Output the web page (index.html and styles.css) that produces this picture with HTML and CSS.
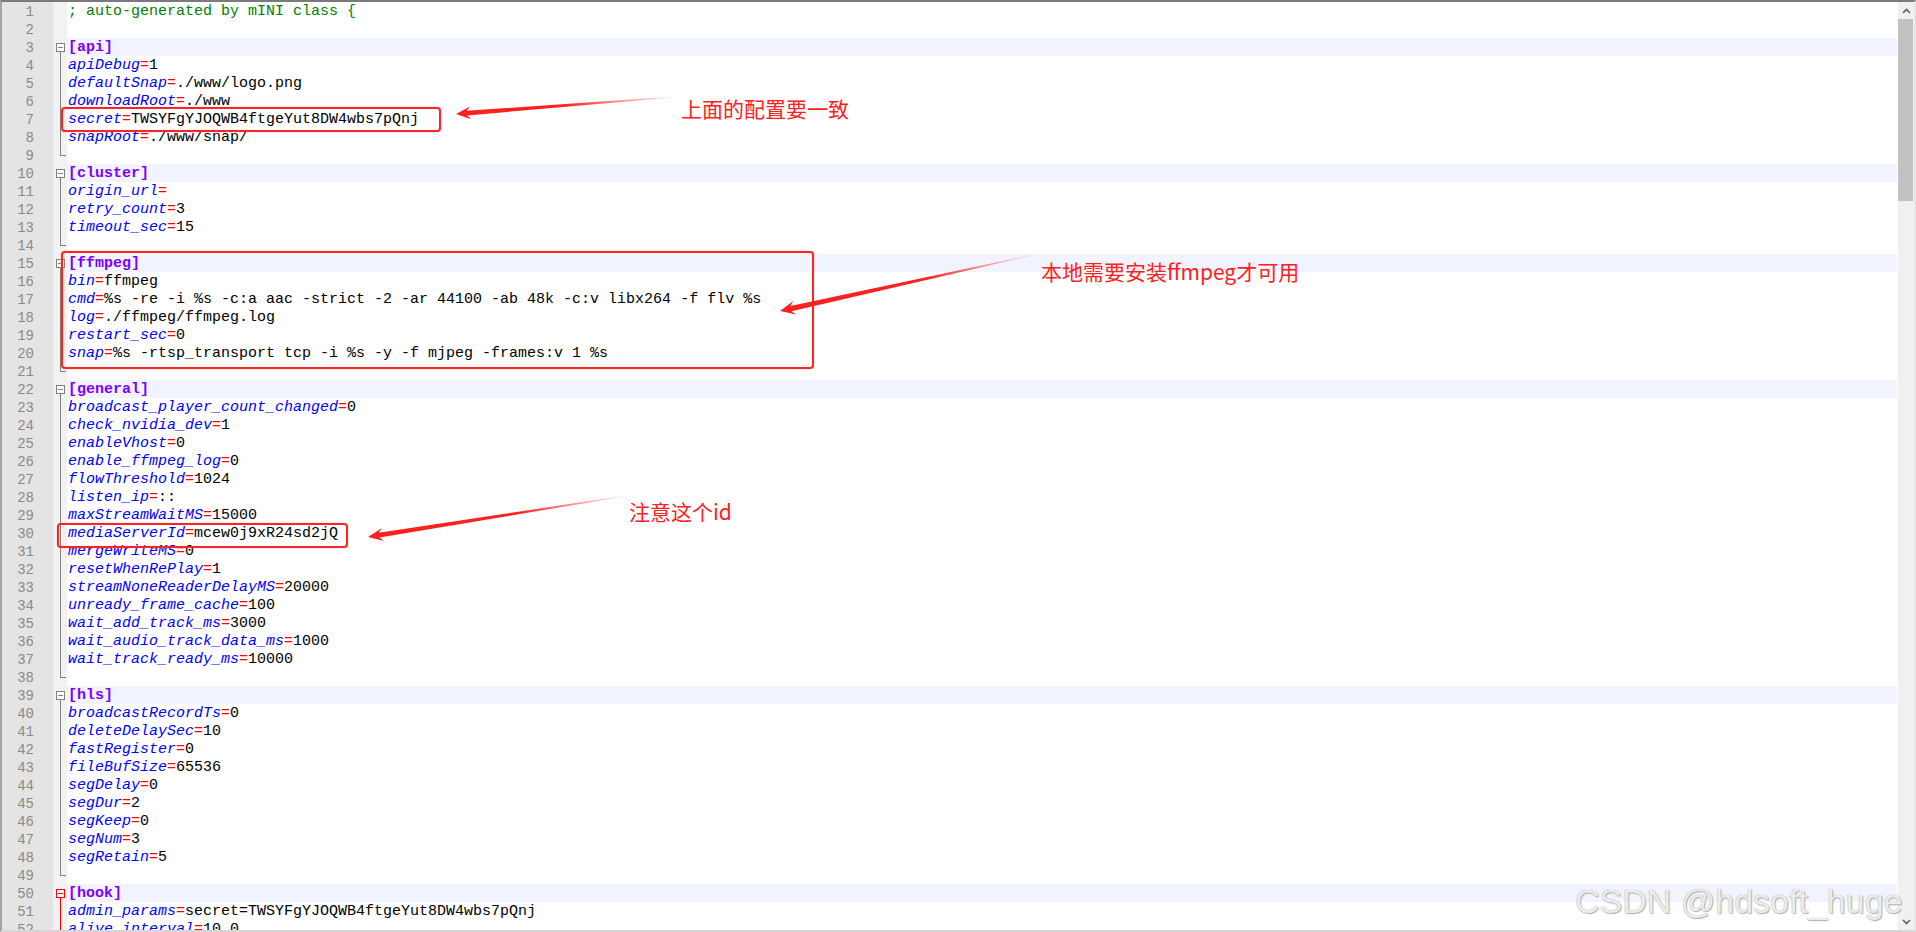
FILE: index.html
```html
<!DOCTYPE html>
<html lang="zh-CN">
<head>
<meta charset="utf-8">
<title>config.ini</title>
<link rel="stylesheet" href="styles.css">
</head>
<body>
<div class="screen">
  <div class="editor">
    <div class="lines">
      <div class="ln"><span class="no">1</span><span class="fm"></span><span class="code"><span class="c">; auto-generated by mINI class {</span></span></div>
      <div class="ln"><span class="no">2</span><span class="fm"></span><span class="code"></span></div>
      <div class="ln sec"><span class="no">3</span><span class="fm head"></span><span class="code"><span class="s">[api]</span></span></div>
      <div class="ln"><span class="no">4</span><span class="fm mid"></span><span class="code"><span class="k">apiDebug</span><span class="q">=</span>1</span></div>
      <div class="ln"><span class="no">5</span><span class="fm mid"></span><span class="code"><span class="k">defaultSnap</span><span class="q">=</span>./www/logo.png</span></div>
      <div class="ln"><span class="no">6</span><span class="fm mid"></span><span class="code"><span class="k">downloadRoot</span><span class="q">=</span>./www</span></div>
      <div class="ln"><span class="no">7</span><span class="fm mid"></span><span class="code"><span class="k">secret</span><span class="q">=</span>TWSYFgYJOQWB4ftgeYut8DW4wbs7pQnj</span></div>
      <div class="ln"><span class="no">8</span><span class="fm mid"></span><span class="code"><span class="k">snapRoot</span><span class="q">=</span>./www/snap/</span></div>
      <div class="ln"><span class="no">9</span><span class="fm end"></span><span class="code"></span></div>
      <div class="ln sec"><span class="no">10</span><span class="fm head"></span><span class="code"><span class="s">[cluster]</span></span></div>
      <div class="ln"><span class="no">11</span><span class="fm mid"></span><span class="code"><span class="k">origin_url</span><span class="q">=</span></span></div>
      <div class="ln"><span class="no">12</span><span class="fm mid"></span><span class="code"><span class="k">retry_count</span><span class="q">=</span>3</span></div>
      <div class="ln"><span class="no">13</span><span class="fm mid"></span><span class="code"><span class="k">timeout_sec</span><span class="q">=</span>15</span></div>
      <div class="ln"><span class="no">14</span><span class="fm end"></span><span class="code"></span></div>
      <div class="ln sec"><span class="no">15</span><span class="fm head"></span><span class="code"><span class="s">[ffmpeg]</span></span></div>
      <div class="ln"><span class="no">16</span><span class="fm mid"></span><span class="code"><span class="k">bin</span><span class="q">=</span>ffmpeg</span></div>
      <div class="ln"><span class="no">17</span><span class="fm mid"></span><span class="code"><span class="k">cmd</span><span class="q">=</span>%s -re -i %s -c:a aac -strict -2 -ar 44100 -ab 48k -c:v libx264 -f flv %s</span></div>
      <div class="ln"><span class="no">18</span><span class="fm mid"></span><span class="code"><span class="k">log</span><span class="q">=</span>./ffmpeg/ffmpeg.log</span></div>
      <div class="ln"><span class="no">19</span><span class="fm mid"></span><span class="code"><span class="k">restart_sec</span><span class="q">=</span>0</span></div>
      <div class="ln"><span class="no">20</span><span class="fm mid"></span><span class="code"><span class="k">snap</span><span class="q">=</span>%s -rtsp_transport tcp -i %s -y -f mjpeg -frames:v 1 %s</span></div>
      <div class="ln"><span class="no">21</span><span class="fm end"></span><span class="code"></span></div>
      <div class="ln sec"><span class="no">22</span><span class="fm head"></span><span class="code"><span class="s">[general]</span></span></div>
      <div class="ln"><span class="no">23</span><span class="fm mid"></span><span class="code"><span class="k">broadcast_player_count_changed</span><span class="q">=</span>0</span></div>
      <div class="ln"><span class="no">24</span><span class="fm mid"></span><span class="code"><span class="k">check_nvidia_dev</span><span class="q">=</span>1</span></div>
      <div class="ln"><span class="no">25</span><span class="fm mid"></span><span class="code"><span class="k">enableVhost</span><span class="q">=</span>0</span></div>
      <div class="ln"><span class="no">26</span><span class="fm mid"></span><span class="code"><span class="k">enable_ffmpeg_log</span><span class="q">=</span>0</span></div>
      <div class="ln"><span class="no">27</span><span class="fm mid"></span><span class="code"><span class="k">flowThreshold</span><span class="q">=</span>1024</span></div>
      <div class="ln"><span class="no">28</span><span class="fm mid"></span><span class="code"><span class="k">listen_ip</span><span class="q">=</span>::</span></div>
      <div class="ln"><span class="no">29</span><span class="fm mid"></span><span class="code"><span class="k">maxStreamWaitMS</span><span class="q">=</span>15000</span></div>
      <div class="ln"><span class="no">30</span><span class="fm mid"></span><span class="code"><span class="k">mediaServerId</span><span class="q">=</span>mcew0j9xR24sd2jQ</span></div>
      <div class="ln"><span class="no">31</span><span class="fm mid"></span><span class="code"><span class="k">mergeWriteMS</span><span class="q">=</span>0</span></div>
      <div class="ln"><span class="no">32</span><span class="fm mid"></span><span class="code"><span class="k">resetWhenRePlay</span><span class="q">=</span>1</span></div>
      <div class="ln"><span class="no">33</span><span class="fm mid"></span><span class="code"><span class="k">streamNoneReaderDelayMS</span><span class="q">=</span>20000</span></div>
      <div class="ln"><span class="no">34</span><span class="fm mid"></span><span class="code"><span class="k">unready_frame_cache</span><span class="q">=</span>100</span></div>
      <div class="ln"><span class="no">35</span><span class="fm mid"></span><span class="code"><span class="k">wait_add_track_ms</span><span class="q">=</span>3000</span></div>
      <div class="ln"><span class="no">36</span><span class="fm mid"></span><span class="code"><span class="k">wait_audio_track_data_ms</span><span class="q">=</span>1000</span></div>
      <div class="ln"><span class="no">37</span><span class="fm mid"></span><span class="code"><span class="k">wait_track_ready_ms</span><span class="q">=</span>10000</span></div>
      <div class="ln"><span class="no">38</span><span class="fm end"></span><span class="code"></span></div>
      <div class="ln sec"><span class="no">39</span><span class="fm head"></span><span class="code"><span class="s">[hls]</span></span></div>
      <div class="ln"><span class="no">40</span><span class="fm mid"></span><span class="code"><span class="k">broadcastRecordTs</span><span class="q">=</span>0</span></div>
      <div class="ln"><span class="no">41</span><span class="fm mid"></span><span class="code"><span class="k">deleteDelaySec</span><span class="q">=</span>10</span></div>
      <div class="ln"><span class="no">42</span><span class="fm mid"></span><span class="code"><span class="k">fastRegister</span><span class="q">=</span>0</span></div>
      <div class="ln"><span class="no">43</span><span class="fm mid"></span><span class="code"><span class="k">fileBufSize</span><span class="q">=</span>65536</span></div>
      <div class="ln"><span class="no">44</span><span class="fm mid"></span><span class="code"><span class="k">segDelay</span><span class="q">=</span>0</span></div>
      <div class="ln"><span class="no">45</span><span class="fm mid"></span><span class="code"><span class="k">segDur</span><span class="q">=</span>2</span></div>
      <div class="ln"><span class="no">46</span><span class="fm mid"></span><span class="code"><span class="k">segKeep</span><span class="q">=</span>0</span></div>
      <div class="ln"><span class="no">47</span><span class="fm mid"></span><span class="code"><span class="k">segNum</span><span class="q">=</span>3</span></div>
      <div class="ln"><span class="no">48</span><span class="fm mid"></span><span class="code"><span class="k">segRetain</span><span class="q">=</span>5</span></div>
      <div class="ln"><span class="no">49</span><span class="fm end"></span><span class="code"></span></div>
      <div class="ln sec"><span class="no">50</span><span class="fm head red"></span><span class="code"><span class="s">[hook]</span></span></div>
      <div class="ln"><span class="no">51</span><span class="fm mid red"></span><span class="code"><span class="k">admin_params</span><span class="q">=</span>secret=TWSYFgYJOQWB4ftgeYut8DW4wbs7pQnj</span></div>
      <div class="ln"><span class="no">52</span><span class="fm mid red"></span><span class="code"><span class="k">alive_interval</span><span class="q">=</span>10.0</span></div>
    </div>
    <div class="sb">
      <div class="sb-btn"><svg width="9" height="6" viewBox="0 0 9 6"><polyline points="1,5 4.5,1.5 8,5" fill="none" stroke="#606060" stroke-width="1.6"/></svg></div>
      <div class="sb-thumb"></div>
      <div class="sb-track"></div>
      <div class="sb-btn"><svg width="9" height="6" viewBox="0 0 9 6"><polyline points="1,1 4.5,4.5 8,1" fill="none" stroke="#606060" stroke-width="1.6"/></svg></div>
    </div>
  </div>

  <div class="box box1"></div>
  <div class="box box2"></div>
  <div class="box box3"></div>

  <svg class="arrows" width="1916" height="932" viewBox="0 0 1916 932">
    <defs>
      <linearGradient id="fade" gradientUnits="userSpaceOnUse" x1="0" y1="0" x2="110" y2="0">
        <stop offset="0" stop-color="#ff2020" stop-opacity="0.05"/>
        <stop offset="1" stop-color="#ff2020" stop-opacity="1"/>
      </linearGradient>
    </defs>
    <g transform="translate(673 97) rotate(175.52)">
      <polygon fill="url(#fade)" points="0,-0.4 206.7,-2.3 203,-6.5 217.7,0 203,6.5 206.7,2.3 0,0.4"/>
    </g>
    <g transform="translate(1033 255) rotate(167.52)">
      <polygon fill="url(#fade)" points="0,-0.4 248,-2.6 244,-7 259.1,0 244,7 248,2.6 0,0.4"/>
    </g>
    <g transform="translate(625 496) rotate(170.94)">
      <polygon fill="url(#fade)" points="0,-0.4 249,-2.4 245,-6.6 260.2,0 245,6.6 249,2.4 0,0.4"/>
    </g>
  </svg>

  <div class="note note1">上面的配置要一致</div>
  <div class="note note2">本地需要安装ffmpeg才可用</div>
  <div class="note note3">注意这个id</div>

  <div class="watermark">CSDN @hdsoft_huge</div>
</div>
</body>
</html>
```

FILE: styles.css
```css
html, body {
  margin: 0;
  padding: 0;
  background: #ffffff;
}

.screen {
  position: relative;
  width: 1916px;
  height: 932px;
  overflow: hidden;
  background: #ffffff;
}

.editor {
  display: flex;
  height: 928px;
  border-top: 2px solid #7a7a7a;
  border-bottom: 2px solid #d6d6d6;
  border-left: 2px solid #a4a4a4;
  border-right: 2px solid #e6e6e6;
  box-sizing: content-box;
  width: 1912px;
}

.lines {
  flex: 1;
  min-width: 0;
  overflow: hidden;
  font-family: "Liberation Mono", "Courier New", monospace;
  font-size: 15px;
  color: #000000;
}

.ln {
  display: flex;
  height: 18px;
  line-height: 20px;
}

.no {
  width: 51px;
  flex: none;
  box-sizing: border-box;
  padding-right: 19px;
  text-align: right;
  background: #e4e4e4;
  color: #8a8a8a;
  font-size: 14px;
}

.fm {
  width: 14px;
  flex: none;
  position: relative;
  background: repeating-conic-gradient(#ebebeb 0 25%, #f9f9f9 0 50%) 0 0 / 2px 2px;
}

.code {
  flex: 1;
  min-width: 0;
  padding-left: 1px;
  white-space: pre;
}

.sec .code {
  background: #f1f3fe;
}

.c { color: #008000; }
.s { color: #8000ff; font-weight: bold; }
.k { color: #0000ff; font-style: italic; }
.q { color: #ff0000; }

/* fold markers */
.fm.head::before {
  content: "";
  position: absolute;
  left: 3px;
  top: 5px;
  width: 9px;
  height: 9px;
  box-sizing: border-box;
  border: 1px solid #808080;
  background: linear-gradient(#808080, #808080) center / 5px 1px no-repeat, #ffffff;
}
.fm.head::after {
  content: "";
  position: absolute;
  left: 7px;
  top: 14px;
  bottom: 0;
  width: 1px;
  background: #808080;
}
.fm.mid::after {
  content: "";
  position: absolute;
  left: 7px;
  top: 0;
  bottom: 0;
  width: 1px;
  background: #808080;
}
.fm.end::after {
  content: "";
  position: absolute;
  left: 7px;
  top: 0;
  height: 10px;
  width: 1px;
  background: #808080;
}
.fm.end::before {
  content: "";
  position: absolute;
  left: 7px;
  top: 9px;
  width: 6px;
  height: 1px;
  background: #808080;
}
.fm.red::after { background: #ff0000; }
.fm.head.red::before {
  border-color: #ff0000;
  background: linear-gradient(#ff0000, #ff0000) center / 5px 1px no-repeat, #ffffff;
}

/* scrollbar */
.sb {
  width: 16px;
  flex: none;
  display: flex;
  flex-direction: column;
  background: #f0f0f0;
  border-left: 1px solid #ffffff;
}
.sb-btn {
  height: 17px;
  flex: none;
  display: flex;
  align-items: center;
  justify-content: center;
}
.sb-thumb {
  height: 182px;
  flex: none;
  margin: 0 1px 0 0;
  background: #c2c2c2;
}
.sb-track {
  flex: 1;
}

/* annotations */
.box {
  position: absolute;
  box-sizing: border-box;
  border: 2px solid #ff2424;
  border-radius: 4px;
  box-shadow: 0 0 1px rgba(255, 40, 40, 0.7);
}
.box1 { left: 61px; top: 107px; width: 380px; height: 25px; }
.box2 { left: 61px; top: 251px; width: 753px; height: 118px; }
.box3 { left: 57px; top: 523px; width: 291px; height: 25px; }

.arrows {
  position: absolute;
  left: 0;
  top: 0;
  pointer-events: none;
}

.note {
  position: absolute;
  font-family: "Microsoft YaHei", "Noto Sans CJK SC", "Noto Sans", sans-serif;
  font-size: 21px;
  line-height: 28px;
  color: #ff2020;
  white-space: nowrap;
}
.note1 { left: 681px; top: 94px; }
.note2 { left: 1041px; top: 257px; }
.note3 { left: 629px; top: 497px; }

.watermark {
  position: absolute;
  left: 1575px;
  top: 884px;
  font-family: "Liberation Sans", Arial, sans-serif;
  font-size: 34px;
  line-height: 34px;
  color: #ececec;
  text-shadow: 0 0 1px #9c9c9c, 1px 1px 1px #b4b4b4;
  white-space: nowrap;
  z-index: 2;
}
```
